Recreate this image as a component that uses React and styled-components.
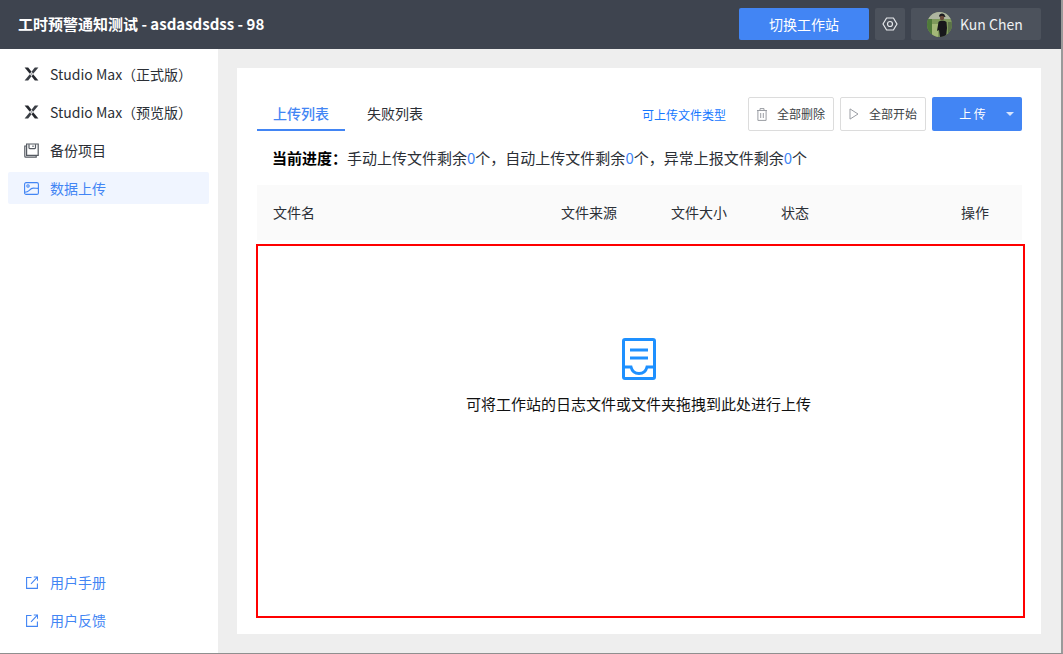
import React from "react";
import styled, { createGlobalStyle } from "styled-components";

const FONT = `"Noto Sans CJK SC", "Noto Sans", sans-serif`;
const BLUE = "#4285f4";

const GlobalStyle = createGlobalStyle`
  html, body {
    margin: 0;
    padding: 0;
    background: #fff;
  }
  * {
    box-sizing: border-box;
  }
`;

const menuItems = [
  { key: "max", label: "Studio Max（正式版）", icon: "x" },
  { key: "pre", label: "Studio Max（预览版）", icon: "x" },
  { key: "backup", label: "备份项目", icon: "backup" },
  { key: "upload", label: "数据上传", icon: "image", active: true },
];

const footerItems = ["用户手册", "用户反馈"];

const columns = [
  { label: "文件名", width: 288 },
  { label: "文件来源", width: 110 },
  { label: "文件大小", width: 110 },
  { label: "状态", width: 180 },
  { label: "操作", width: 60 },
];

const XLogo = () => (
  <svg width="15" height="14" viewBox="0 0 15 14">
    <path d="M.6.6h3.6l3.3 4.2-1.7 2z" fill="#24272d" />
    <path d="M14.4.6h-3.6L7.5 4.8l1.7 2z" fill="#3a3e45" />
    <path d="M.6 13.4h3.6l3.3-4.2-1.7-2z" fill="#3a3e45" />
    <path d="M14.4 13.4h-3.6L7.5 9.2l1.7-2z" fill="#24272d" />
    <path d="M7.5 5.4L9 7 7.5 8.6 6 7z" fill="#a9abaf" />
  </svg>
);

const BackupIcon = () => (
  <svg width="15" height="15" viewBox="0 0 15 15" fill="none" stroke="#555a62" strokeWidth="1.2">
    <path d="M2.6 1h11.6v11.4H2.600z" />
    <path d="M2.600 3H.8v10.200c0 .5.4.9.9.9h10.500v-1.700" />
    <path d="M5 1.200v3.600a.8.8 0 0 0 .8.8h4.900a.8.8 0 0 0 .8-.8V1.200" />
    <path d="M9 2.400v1.700" />
  </svg>
);

const ImageIcon = () => (
  <svg width="15" height="13" viewBox="0 0 15 13" fill="none" stroke={BLUE} strokeWidth="1.1">
    <rect x=".6" y=".6" width="13.800" height="11.800" rx="1.500" />
    <circle cx="4" cy="4" r="1.200" />
    <path d="M.8 10.200c2.500 0 3.200-.6 4.500-1.900 1.300-1.400 2.300-2.200 4-2.200 2 0 3.400.3 5 .3" />
  </svg>
);

const LinkIcon = () => (
  <svg width="12" height="13" viewBox="0 0 12 13" fill="none" stroke={BLUE} strokeWidth="1.100">
    <path d="M5.500 1.500H.6v10.900h10.800V7.500" />
    <path d="M5 7.800L11.400 1.200M7.800 1h3.700v3.700" />
  </svg>
);

const SettingsIcon = () => (
  <svg width="16" height="14" viewBox="0 0 16 14" fill="none" stroke="#e6e8eb" strokeWidth="1.200">
    <path d="M4.600 1h6.800L15 7l-3.600 6H4.600L1 7z" strokeLinejoin="round" />
    <circle cx="8" cy="7" r="2.500" />
  </svg>
);

const TrashIcon = () => (
  <svg width="10" height="13" viewBox="0 0 10 13" fill="none" stroke="#9a9da3" strokeWidth="1">
    <path d="M0 2.500h10M3 2.300V.6h4v1.700M.9 2.500v9.900h8.200V2.500M3.700 5v5M6.300 5v5" />
  </svg>
);

const PlayIcon = () => (
  <svg width="10" height="12" viewBox="0 0 10 12" fill="none" stroke="#9a9da3" strokeWidth="1">
    <path d="M1 .9L9 6l-8 5.100z" strokeLinejoin="round" />
  </svg>
);

const InboxIcon = () => (
  <svg width="34" height="42" viewBox="0 0 34 42" fill="none" stroke="#1e90ff" strokeWidth="3">
    <rect x="1.500" y="1.500" width="31" height="39" rx="1.500" />
    <path d="M8 12h18M8 20h18" />
    <path d="M1.500 29h7.500c1 4 4 6.500 8 6.500s7-2.500 8-6.500h7.500" />
  </svg>
);

const AvatarPhoto = () => (
  <svg width="25" height="25" viewBox="0 0 25 25">
    <defs>
      <clipPath id="avatar-clip">
        <circle cx="12.500" cy="12.500" r="12.500" />
      </clipPath>
    </defs>
    <g clipPath="url(#avatar-clip)">
      <rect width="25" height="25" fill="#7f9a5c" />
      <rect width="25" height="7" fill="#aeb5a0" />
      <rect x="0" y="7" width="5" height="18" fill="#4f7a3a" />
      <rect x="5" y="12" width="6" height="13" fill="#a3b878" />
      <rect x="21" y="10" width="4" height="15" fill="#5c7448" />
      <path d="M12 4.500c0-2 1.500-3 3-3s3 1 3 2.800l1 .4-4 .6-3-.8z" fill="#1d1c20" />
      <circle cx="15" cy="6" r="2.200" fill="#6a4a3a" />
      <path d="M11.500 10c1-1.800 6.500-1.800 8 0l.5 6-1 9h-6l-1-7-2 1z" fill="#17171b" />
    </g>
  </svg>
);

const menuIcons = {
  x: <XLogo />,
  backup: <BackupIcon />,
  image: <ImageIcon />,
};

export default function App() {
  return (
    <>
      <GlobalStyle />
      <Page>
        <Header>
          <Title>工时预警通知测试 - asdasdsdss - 98</Title>
          <HeaderActions>
            <SwitchButton>切换工作站</SwitchButton>
            <SettingsButton>
              <SettingsIcon />
            </SettingsButton>
            <UserButton>
              <AvatarPhoto />
              <span>Kun Chen</span>
            </UserButton>
          </HeaderActions>
        </Header>
        <Body>
          <Sidebar>
            <Menu>
              {menuItems.map((item) => (
                <MenuItem key={item.key} $active={item.active}>
                  <IconSlot>{menuIcons[item.icon]}</IconSlot>
                  {item.label}
                </MenuItem>
              ))}
            </Menu>
            <Menu>
              {footerItems.map((label) => (
                <MenuItem key={label} $link>
                  <IconSlot $inset>
                    <LinkIcon />
                  </IconSlot>
                  {label}
                </MenuItem>
              ))}
            </Menu>
          </Sidebar>
          <Main>
            <Card>
              <Toolbar>
                <Tabs>
                  <Tab $active>上传列表</Tab>
                  <Tab>失败列表</Tab>
                </Tabs>
                <Actions>
                  <TypeLink>可上传文件类型</TypeLink>
                  <GhostButton>
                    <TrashIcon />
                    全部删除
                  </GhostButton>
                  <GhostButton>
                    <PlayIcon />
                    全部开始
                  </GhostButton>
                  <UploadButton>
                    <UploadLabel>上 传</UploadLabel>
                    <Caret />
                  </UploadButton>
                </Actions>
              </Toolbar>
              <Progress>
                <strong>当前进度：</strong>手动上传文件剩余<Count>0</Count>个，自动上传文件剩余
                <Count>0</Count>个，异常上报文件剩余<Count>0</Count>个
              </Progress>
              <TableHead>
                {columns.map((col) => (
                  <HeadCell key={col.label} $width={col.width}>
                    {col.label}
                  </HeadCell>
                ))}
              </TableHead>
              <DropZone>
                <InboxIcon />
                <DropText>可将工作站的日志文件或文件夹拖拽到此处进行上传</DropText>
              </DropZone>
            </Card>
          </Main>
        </Body>
      </Page>
    </>
  );
}

const Page = styled.div`
  width: 1063px;
  height: 654px;
  display: flex;
  flex-direction: column;
  overflow: hidden;
  font-family: ${FONT};
  border-right: 2px solid #9a9a9a;
  border-bottom: 1px solid #8f8f8f;
`;

const Header = styled.header`
  height: 49px;
  flex: none;
  display: flex;
  align-items: center;
  justify-content: space-between;
  padding: 0 20px 1px 18px;
  background: #3e444f;
`;

const Title = styled.div`
  padding-bottom: 2px;
  color: #fff;
  font-size: 15px;
  font-weight: 700;
`;

const HeaderActions = styled.div`
  display: flex;
  gap: 6px;
`;

const SwitchButton = styled.button`
  width: 130px;
  height: 32px;
  padding: 0;
  border: 0;
  border-radius: 2px;
  background: ${BLUE};
  color: #fff;
  font: 14px ${FONT};
`;

const SettingsButton = styled.button`
  width: 30px;
  height: 32px;
  padding: 0;
  border: 0;
  border-radius: 2px;
  background: #4c525c;
  display: flex;
  align-items: center;
  justify-content: center;
`;

const UserButton = styled.div`
  width: 130px;
  height: 32px;
  padding-left: 16px;
  border-radius: 2px;
  background: #4c525c;
  color: #eef0f2;
  font-size: 14px;
  display: flex;
  align-items: center;
  gap: 8px;
`;

const Body = styled.div`
  flex: 1;
  display: flex;
  min-height: 0;
`;

const Sidebar = styled.aside`
  width: 218px;
  flex: none;
  display: flex;
  flex-direction: column;
  justify-content: space-between;
  padding: 10px 9px 16px 8px;
  background: #fff;
`;

const Menu = styled.nav`
  display: flex;
  flex-direction: column;
  gap: 6px;
`;

const MenuItem = styled.div`
  height: 32px;
  flex: none;
  display: flex;
  align-items: center;
  margin-top: ${(p) => (p.$active ? -1 : 0)}px;
  padding: 0 0 ${(p) => (p.$active ? 0 : 2)}px 16px;
  border-radius: 2px;
  font-size: 14px;
  color: ${(p) => (p.$active || p.$link ? BLUE : "#2b2f36")};
  background: ${(p) => (p.$active ? "#f0f5ff" : "transparent")};
`;

const IconSlot = styled.span`
  width: 26px;
  flex: none;
  display: flex;
  align-items: center;
  padding-left: ${(p) => (p.$inset ? 2 : 0)}px;
`;

const Main = styled.main`
  flex: 1;
  padding: 19px 20px 19px 19px;
  background: #eee;
`;

const Card = styled.section`
  height: 100%;
  display: flex;
  flex-direction: column;
  padding: 29px 19px 16px 20px;
  background: #fff;
`;

const Toolbar = styled.div`
  display: flex;
  align-items: flex-start;
  justify-content: space-between;
`;

const Tabs = styled.div`
  display: flex;
  gap: 6px;
`;

const Tab = styled.div`
  height: 34px;
  padding: 0 16px;
  font-size: 14px;
  line-height: 32px;
  font-weight: ${(p) => (p.$active ? 500 : 400)};
  color: ${(p) => (p.$active ? BLUE : "#2b2f36")};
  border-bottom: 2px solid ${(p) => (p.$active ? BLUE : "transparent")};
`;

const Actions = styled.div`
  display: flex;
  align-items: center;
  gap: 6px;
`;

const TypeLink = styled.span`
  margin-right: 16px;
  color: #1677ff;
  font-size: 12px;
`;

const GhostButton = styled.button`
  width: 86px;
  height: 34px;
  padding: 0 0 2px 8px;
  display: flex;
  align-items: center;
  gap: 10px;
  border: 1px solid #dcdcdc;
  border-radius: 2px;
  background: #fff;
  color: #3b3f46;
  font: 12px ${FONT};

  svg {
    margin-top: 2px;
  }
`;

const UploadButton = styled.button`
  width: 90px;
  height: 34px;
  padding: 0;
  display: flex;
  align-items: center;
  border: 0;
  border-radius: 2px;
  background: ${BLUE};
  color: #fff;
  font: 12px ${FONT};
`;

const UploadLabel = styled.span`
  width: 74px;
  padding: 0 0 2px 7px;
  text-align: center;
`;

const Caret = styled.i`
  width: 0;
  height: 0;
  border-left: 4px solid transparent;
  border-right: 4px solid transparent;
  border-top: 4px solid #d6e4fd;
`;

const Progress = styled.div`
  height: 54px;
  padding: 16px 0 0 15px;
  font-size: 15px;
  line-height: 22px;
  color: #2b2f36;

  strong {
    color: #000;
    font-weight: 700;
  }
`;

const Count = styled.span`
  color: ${BLUE};
`;

const TableHead = styled.div`
  height: 55px;
  flex: none;
  display: flex;
  align-items: center;
  padding: 0 0 2px 16px;
  background: #fafafa;
`;

const HeadCell = styled.div`
  width: ${(p) => p.$width}px;
  flex: none;
  font-size: 14px;
  color: #2b2f36;
`;

const DropZone = styled.div`
  flex: 1;
  margin: 4px -3px 0 -1px;
  display: flex;
  flex-direction: column;
  align-items: center;
  justify-content: center;
  padding: 0 4px 110px 0;
  gap: 13px;
  border: 2px solid #f00;
`;

const DropText = styled.div`
  font-size: 15px;
  color: #111;
`;
